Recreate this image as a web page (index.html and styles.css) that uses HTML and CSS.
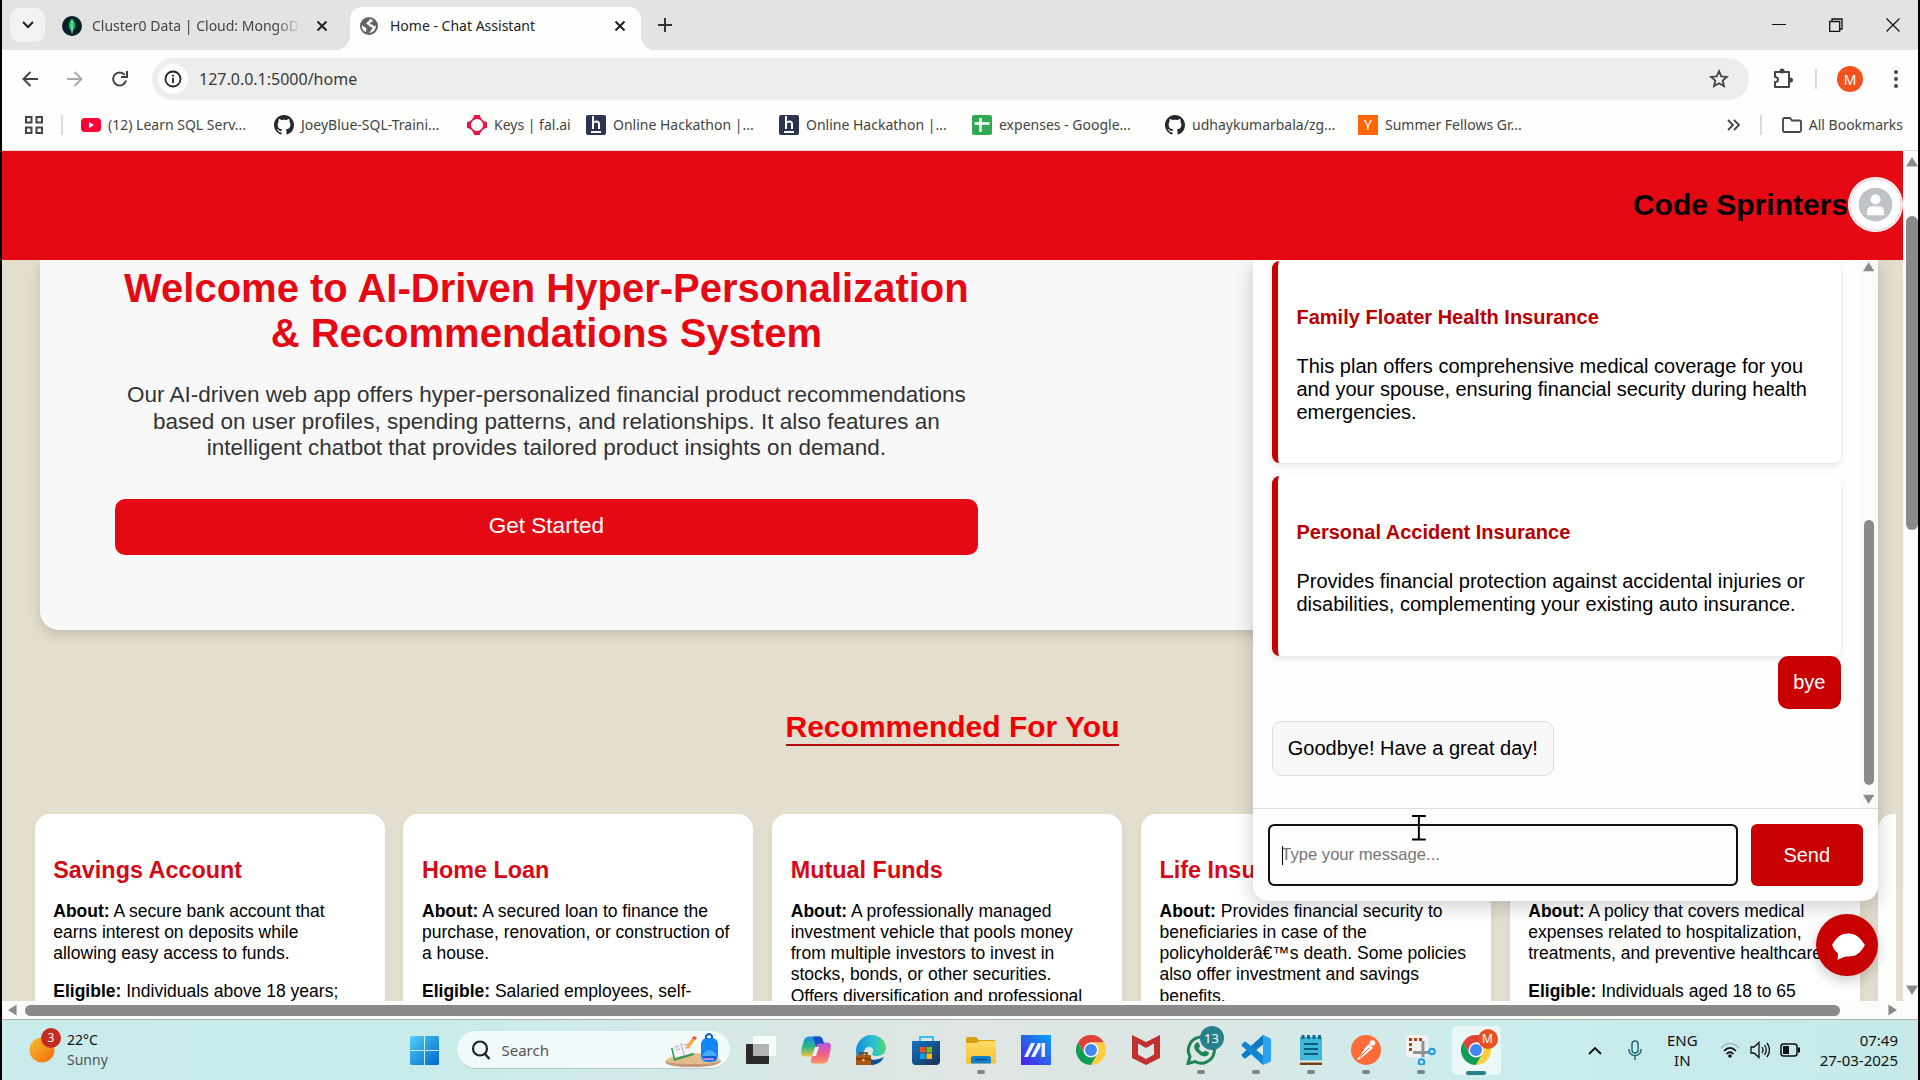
FILE: index.html
```html
<!DOCTYPE html>
<html lang="en">
<head>
<meta charset="utf-8">
<title>Home - Chat Assistant</title>
<link rel="stylesheet" href="styles.css">
</head>
<body>
<svg class="defs" aria-hidden="true">
  <defs>
    <linearGradient id="gWin" x1="0" y1="0" x2="1" y2="1"><stop offset="0" stop-color="#4fd0fb"/><stop offset="1" stop-color="#0067c8"/></linearGradient>
    <linearGradient id="gSun" x1="0" y1="0" x2="1" y2="1"><stop offset="0" stop-color="#fbc02d"/><stop offset="1" stop-color="#f06a10"/></linearGradient>
    <linearGradient id="gCopA" x1="0" y1="0" x2="0" y2="1"><stop offset="0" stop-color="#1a8fe8"/><stop offset=".5" stop-color="#28b58a"/><stop offset="1" stop-color="#f5c33b"/></linearGradient>
    <linearGradient id="gCopB" x1="0" y1="0" x2="0" y2="1"><stop offset="0" stop-color="#a95be8"/><stop offset=".5" stop-color="#ee5a8f"/><stop offset="1" stop-color="#ff9560"/></linearGradient>
    <linearGradient id="gEdge" x1="0" y1="0" x2="1" y2="0"><stop offset="0" stop-color="#1489d8"/><stop offset=".6" stop-color="#2cc3d2"/><stop offset="1" stop-color="#55d868"/></linearGradient>
    <linearGradient id="gStore" x1="0" y1="0" x2="1" y2="1"><stop offset="0" stop-color="#1173c4"/><stop offset="1" stop-color="#1c3156"/></linearGradient>
    <linearGradient id="gAsus" x1="0" y1="1" x2="1" y2="0"><stop offset="0" stop-color="#4b1fe8"/><stop offset="1" stop-color="#0ba2f8"/></linearGradient>
    <linearGradient id="gFold" x1="0" y1="0" x2="0" y2="1"><stop offset="0" stop-color="#ffdc6a"/><stop offset="1" stop-color="#f8c02a"/></linearGradient>
    <symbol id="github" viewBox="0 0 16 16"><path fill="#24292f" d="M8 0C3.58 0 0 3.58 0 8c0 3.54 2.29 6.53 5.47 7.59.4.07.55-.17.55-.38 0-.19-.01-.82-.01-1.49-2.01.37-2.53-.49-2.69-.94-.09-.23-.48-.94-.82-1.13-.28-.15-.68-.52-.01-.53.63-.01 1.08.58 1.23.82.72 1.21 1.87.87 2.33.66.07-.52.28-.87.51-1.07-1.78-.2-3.64-.89-3.64-3.95 0-.87.31-1.59.82-2.15-.08-.2-.36-1.02.08-2.12 0 0 .67-.21 2.2.82.64-.18 1.32-.27 2-.27s1.36.09 2 .27c1.53-1.04 2.2-.82 2.2-.82.44 1.1.16 1.92.08 2.12.51.56.82 1.27.82 2.15 0 3.07-1.87 3.75-3.65 3.95.29.25.54.73.54 1.48 0 1.07-.01 1.93-.01 2.2 0 .21.15.46.55.38A8.01 8.01 0 0 0 16 8c0-4.42-3.58-8-8-8z"/></symbol>
    <symbol id="chrome" viewBox="0 0 30 30"><path fill="#db4437" d="M15 15 2 7.500A15 15 0 0 1 28 7.500L15 7.500z"/><path fill="#db4437" d="M2 7.500 8.500 18.750 15 7.500z"/><path fill="#0f9d58" d="M2 7.500A15 15 0 0 0 15 30L21.500 18.750 8.500 18.750z"/><path fill="#ffcd40" d="M28 7.500A15 15 0 0 1 15 30L21.500 18.750 15 7.500z"/><circle cx="15" cy="15" r="7.500" fill="#fff"/><circle cx="15" cy="15" r="6" fill="#4285f4"/></symbol>
    <symbol id="cross" viewBox="0 0 12 12"><path d="M1.500 1.500l9 9M10.500 1.500l-9 9" fill="none" stroke="currentColor" stroke-width="2"/></symbol>
    <symbol id="hack" viewBox="0 0 20 20"><rect width="20" height="20" rx="2" fill="#2b3350"/><path d="M7 1v13M7 8.500c1-2.500 6-3 6 .5v5M5 17h10" fill="none" stroke="#fff" stroke-width="2"/></symbol>
  </defs>
</svg>

<div class="browser">
  <div class="tabstrip">
    <button class="tab-search" aria-label="Search tabs"><svg width="12" height="8" viewBox="0 0 12 8"><path d="M1 1l5 5 5-5" fill="none" stroke="#222" stroke-width="2"/></svg></button>
    <div class="tab">
      <svg width="20" height="20" viewBox="0 0 20 20"><circle cx="10" cy="10" r="10" fill="#061f2b"/><path d="M10 2.500c5 5 3.500 10 0 13.500-3.500-3.500-5-8.500 0-13.500z" fill="#10c25a"/><path d="M10 5v12.500" stroke="#b8e6c4"/></svg>
      <span class="tab-title fade">Cluster0 Data | Cloud: MongoDB</span>
      <button class="tab-close" aria-label="Close tab"><svg width="12" height="12"><use href="#cross"/></svg></button>
    </div>
    <div class="tab active">
      <svg width="18" height="18" viewBox="0 0 18 18"><circle cx="9" cy="9" r="9" fill="#5f6368"/><path d="M10.500 2c-2 .5-1 2.500-3 3-1.500.5-1.500 2 0 2.500 2 .3 1 2 3 2.200 2 .2 2.500 1.800 1 3-1 .8-1 2.500-2.500 3.300 4-.3 7-3.500 7-7.500-1 1-2 1-3-.5-.8-1-3 .2-3-1.500 0-1.500 2.500-1 3-3zM2 8c1.500 2 4 2 4.500 4 .3 1.500-1 1.500-.5 3C3 14 1.500 11 2 8z" fill="#fff"/></svg>
      <span class="tab-title">Home - Chat Assistant</span>
      <button class="tab-close" aria-label="Close tab"><svg width="12" height="12"><use href="#cross"/></svg></button>
    </div>
    <button class="new-tab" aria-label="New tab"><svg width="14" height="14" viewBox="0 0 14 14"><path d="M7 0v14M0 7h14" stroke="#333" stroke-width="2"/></svg></button>
    <div class="window-controls">
      <button aria-label="Minimize"><svg width="14" height="14" viewBox="0 0 14 14"><path d="M0 6.500h14" stroke="#111"/></svg></button>
      <button aria-label="Restore"><svg width="14" height="14" viewBox="0 0 14 14"><path d="M.7 3.500h10v10H.7zM3 3V1h10v10h-2" fill="none" stroke="#111" stroke-width="1.300"/></svg></button>
      <button aria-label="Close"><svg width="14" height="14" viewBox="0 0 14 14"><path d="M.5.5l13 13M13.500.5l-13 13" stroke="#111" stroke-width="1.200"/></svg></button>
    </div>
  </div>

  <div class="toolbar">
    <button aria-label="Back"><svg width="16" height="16" viewBox="0 0 16 16"><path d="M16 8H2M8.500 1L1.500 8l7 7" fill="none" stroke="#444" stroke-width="2"/></svg></button>
    <button aria-label="Forward"><svg width="16" height="16" viewBox="0 0 16 16"><path d="M0 8h14M7.500 1l7 7-7 7" fill="none" stroke="#aaa" stroke-width="2"/></svg></button>
    <button aria-label="Reload"><svg width="16" height="16" viewBox="0 0 16 16"><path d="M14 9.500A6.500 6.500 0 1 1 12.800 4M15 0v6H9" fill="none" stroke="#444" stroke-width="2"/></svg></button>
    <div class="omnibox">
      <button class="site-info" aria-label="Site information"><svg width="18" height="18" viewBox="0 0 18 18"><circle cx="9" cy="9" r="7.500" fill="none" stroke="#222" stroke-width="1.800"/><path d="M9 8v5M9 4.700v2" stroke="#222" stroke-width="1.800"/></svg></button>
      <input class="url" type="text" aria-label="Address" value="127.0.0.1:5000/home">
      <button aria-label="Bookmark this page"><svg width="20" height="20" viewBox="0 0 20 20"><path d="M10 2.200l2.300 5.200 5.600.5-4.200 3.700 1.300 5.500-5-2.900-5 2.900 1.300-5.500L2.100 7.900l5.600-.5z" fill="none" stroke="#444" stroke-width="1.800"/></svg></button>
    </div>
    <button class="extensions" aria-label="Extensions"><svg width="22" height="22" viewBox="0 0 22 22"><path d="M3 4h14v15H3v-5c4 0 4-5 0-5z" fill="none" stroke="#444" stroke-width="2" stroke-linejoin="round"/><circle cx="10" cy="3" r="2.500" fill="#444"/><circle cx="18.500" cy="12" r="2.500" fill="#444"/></svg></button>
    <span class="rule"></span>
    <button class="profile" aria-label="Profile">M</button>
    <button class="menu" aria-label="Menu"><svg width="4" height="18" viewBox="0 0 4 18"><circle cx="2" cy="2" r="2" fill="#444"/><circle cx="2" cy="9" r="2" fill="#444"/><circle cx="2" cy="16" r="2" fill="#444"/></svg></button>
  </div>

  <nav class="bookmarks">
    <button aria-label="Apps"><svg width="18" height="18" viewBox="0 0 18 18"><path d="M1 1h5.500v5.500H1zM11.500 1H17v5.500h-5.500zM1 11.500h5.500V17H1zM11.500 11.500H17V17h-5.500z" fill="none" stroke="#444" stroke-width="2"/></svg></button>
    <span class="rule"></span>
    <a href="#" class="mark"><svg width="20" height="20" viewBox="0 0 20 20"><rect y="3" width="20" height="14" rx="4" fill="#f03"/><path d="M8 7v6l5-3z" fill="#fff"/></svg><span>(12) Learn SQL Serv...</span></a>
    <a href="#" class="mark"><svg width="20" height="20"><use href="#github"/></svg><span>JoeyBlue-SQL-Traini...</span></a>
    <a href="#" class="mark short"><svg width="20" height="20" viewBox="0 0 20 20"><path fill="#e0174a" fill-rule="evenodd" d="M7 0h6c.3 3.500 3 6.500 7 7v6c-4 .5-6.700 3.500-7 7H7c-.3-3.500-3-6.500-7-7V7c4-.5 6.700-3.500 7-7zm3 4a6 6 0 1 0 0 12 6 6 0 0 0 0-12z"/></svg><span>Keys | fal.ai</span></a>
    <a href="#" class="mark"><svg width="20" height="20"><use href="#hack"/></svg><span>Online Hackathon |...</span></a>
    <a href="#" class="mark"><svg width="20" height="20"><use href="#hack"/></svg><span>Online Hackathon |...</span></a>
    <a href="#" class="mark"><svg width="20" height="20" viewBox="0 0 20 20"><rect width="20" height="20" rx="2" fill="#31a953"/><path d="M8.500 3v14M2.500 8.500h15" stroke="#fff" stroke-width="2.500"/></svg><span>expenses - Google...</span></a>
    <a href="#" class="mark"><svg width="20" height="20"><use href="#github"/></svg><span>udhaykumarbala/zg...</span></a>
    <a href="#" class="mark"><span class="yc">Y</span><span>Summer Fellows Gr...</span></a>
    <button class="more" aria-label="More bookmarks"><svg width="13" height="12" viewBox="0 0 13 12"><path d="M1 1l5 5-5 5M7 1l5 5-5 5" fill="none" stroke="#444" stroke-width="1.800"/></svg></button>
    <span class="rule"></span>
    <a href="#" class="mark all"><svg width="20" height="16" viewBox="0 0 20 16"><path d="M1 2.500Q1 1 2.500 1H8l2 2.500h7.500Q19 3.500 19 5v8.500q0 1.500-1.500 1.500h-15Q1 15 1 13.500z" fill="none" stroke="#444" stroke-width="1.800"/></svg><span>All Bookmarks</span></a>
  </nav>

  <div class="frame">
    <div class="view">
      <div class="page">
        <header class="site-header">
          <h2>Code Sprinters</h2>
          <a href="#" class="avatar" aria-label="Profile"><svg viewBox="0 0 44 44"><circle cx="22" cy="22" r="22" fill="#fff"/><circle cx="22" cy="22" r="20.500" fill="none" stroke="#f6b0b4" stroke-width=".6"/><circle cx="22" cy="22" r="13.500" fill="#bfc2c6"/><circle cx="22" cy="18" r="4" fill="#fff"/><path d="M15 29.500c0-6.500 3-6 7-6s7-.5 7 6q0 1-1 1H16q-1 0-1-1z" fill="#fff"/></svg></a>
        </header>
        <main>
          <section class="hero">
            <div class="hero-text">
              <h1>Welcome to AI-Driven Hyper-Personalization &amp; Recommendations System</h1>
              <p>Our AI-driven web app offers hyper-personalized financial product recommendations based on user profiles, spending patterns, and relationships. It also features an intelligent chatbot that provides tailored product insights on demand.</p>
              <button>Get Started</button>
            </div>
          </section>
          <section class="recommended">
            <h2>Recommended For You</h2>
            <div class="cards">
              <article class="card"><h3>Savings Account</h3><p><b>About:</b> A secure bank account that earns interest on deposits while allowing easy access to funds.</p><p><b>Eligible:</b> Individuals above 18 years;</p></article>
              <article class="card"><h3>Home Loan</h3><p><b>About:</b> A secured loan to finance the purchase, renovation, or construction of a house.</p><p><b>Eligible:</b> Salaried employees, self-</p></article>
              <article class="card"><h3>Mutual Funds</h3><p><b>About:</b> A professionally managed investment vehicle that pools money from multiple investors to invest in stocks, bonds, or other securities. Offers diversification and professional</p></article>
              <article class="card"><h3>Life Insurance</h3><p><b>About:</b> Provides financial security to beneficiaries in case of the policyholderâ€™s death. Some policies also offer investment and savings benefits.</p></article>
              <article class="card"><h3>Health Insurance</h3><p><b>About:</b> A policy that covers medical expenses related to hospitalization, treatments, and preventive healthcare.</p><p><b>Eligible:</b> Individuals aged 18 to 65</p></article>
              <article class="card"></article>
            </div>
          </section>
        </main>

        <aside class="chat">
          <div class="chat-body">
            <div class="messages">
              <article class="product tall"><h4>Family Floater Health Insurance</h4><p>This plan offers comprehensive medical coverage for you and your spouse, ensuring financial security during health emergencies.</p></article>
              <article class="product"><h4>Personal Accident Insurance</h4><p>Provides financial protection against accidental injuries or disabilities, complementing your existing auto insurance.</p></article>
              <div class="bubble user">bye</div>
              <div class="bubble bot">Goodbye! Have a great day!</div>
            </div>
            <div class="scroll chat-scroll">
              <svg class="arrow" viewBox="0 0 12 10"><path d="M6 0l6 9.500H0z"/></svg>
              <span class="before"></span><span class="thumb"></span><span class="after"></span>
              <svg class="arrow" viewBox="0 0 12 10"><path d="M6 10l6-9.500H0z"/></svg>
            </div>
          </div>
          <form class="composer">
            <div class="field"><input type="text" aria-label="Message" placeholder="Type your message..."><span class="caret"></span></div>
            <button type="button">Send</button>
          </form>
        </aside>
        <button class="chat-toggle" aria-label="Toggle chat"><svg width="28" height="24" viewBox="0 0 32 26"><path d="M16 1.500c6.500 0 10 3 15 10.500-4.500 8-8.500 10.500-15 10.500-2.500 0-4 .3-6 1.500l-4 1.500.5-5.500C4 17.500 2 15.500 1 12 5.500 4 9.500 1.500 16 1.500z" fill="#fff"/></svg></button>
        <svg class="pointer" width="11" height="22" viewBox="0 0 14 26" aria-hidden="true"><path d="M0 1h14M0 25h14M7 1v24" stroke="#000" stroke-width="2"/></svg>
      </div>
    </div>
    <div class="scroll page-scroll">
      <svg class="arrow" viewBox="0 0 12 10"><path d="M6 0l6 9.500H0z"/></svg>
      <span class="before"></span><span class="thumb"></span><span class="after"></span>
      <svg class="arrow" viewBox="0 0 12 10"><path d="M6 10l6-9.500H0z"/></svg>
    </div>
    <div class="scroll across">
      <svg class="arrow" viewBox="0 0 10 12"><path d="M0 6l9.500-6v12z"/></svg>
      <span class="thumb"></span><span class="after"></span>
      <svg class="arrow" viewBox="0 0 10 12"><path d="M10 6L.5 0v12z"/></svg>
    </div>
  </div>
</div>

<footer class="taskbar">
  <button class="weather">
    <span class="sun"><svg width="26" height="26" viewBox="0 0 26 26"><circle cx="13" cy="13" r="12.500" fill="url(#gSun)"/></svg><span class="badge red">3</span></span>
    <span class="two-line"><span>22°C</span><span class="dim">Sunny</span></span>
  </button>
  <div class="apps">
    <button class="app start" aria-label="Start"><svg width="29" height="29" viewBox="0 0 29 29"><path d="M1 0h13v14H0V1zM15 0h13l1 1v13H15zM0 15h14v14H1l-1-1zM15 15h14v13l-1 1H15z" fill="url(#gWin)"/></svg></button>
    <label class="search">
      <svg width="20" height="20" viewBox="0 0 20 20"><circle cx="9" cy="8.500" r="7" fill="none" stroke="#222" stroke-width="2.200"/><path d="M13.500 13.500l5 5.500" stroke="#222" stroke-width="2.500"/></svg>
      <input type="text" placeholder="Search" aria-label="Search">
      <svg width="58" height="34" viewBox="0 0 58 34"><path d="M1 28q10-8 28-8t28 7q-3 6-28 6.500T1 28z" fill="#e3bd90"/><path d="M1 28q0 6 28 6t28-7q-3 4-28 4T1 28z" fill="#c49a74"/><path d="M7 15l17-5 6 12-20 6z" fill="#3b9a54"/><path d="M8 12l9-2 9-2 3 12-18 5z" fill="#f4f3fb"/><path d="M17 10l3 12M11 14l4-1M12 17l4-1M20 12l5-1M21 15l5-1" stroke="#aab"/><path d="M22 14l6-9 3 2-7 9z" fill="#f7a638"/><path d="M28 5l2-2 3 2-2 2z" fill="#e34b3d"/><rect x="37" y="5" width="17" height="24" rx="6" fill="#1287f5"/><path d="M42 6V3q3-4 6 0v3" fill="none" stroke="#0b63c8" stroke-width="2"/><path d="M39 18h13v9H39z" fill="#0c5bd4"/><path d="M39 20q6-6 13 0v3H39z" fill="#43aefc"/><path d="M39 25h11v2H39z" fill="#b987f2"/></svg>
    </label>
    <button class="app" aria-label="Task view"><svg width="30" height="30" viewBox="0 0 30 30"><rect y="9" width="23" height="20" rx="1" fill="#2a2a28"/><rect x="7" y="1" width="23" height="20" rx="1" fill="#fff" opacity=".8"/><path d="M7 9h16v12H7z" fill="#aaa" opacity=".8"/></svg></button>
    <button class="app" aria-label="Copilot"><svg width="30" height="30" viewBox="0 0 30 30"><path d="M8 1.500h10q3 0 4 4l1 3h-5q-2 0-3 4l-2 6q-1 3-4 3H4q-4 0-4-4 0-3 2-9 1-7 6-7z" fill="url(#gCopA)"/><path d="M22 28.500H12q-3 0-2-4l5-15q1-2 4-2h7q4 0 4 4 0 3-2 10-1 7-6 7z" fill="url(#gCopB)"/><path d="M14 12h4l-3 9h-4z" fill="#f4ece8"/><path d="M12 1.500h6q3 0 4 4l1 3h-5q-2 0-3 3z" fill="#1550c8"/></svg></button>
    <button class="app" aria-label="Edge"><svg width="30" height="30" viewBox="0 0 30 30"><path d="M0 16C0 7 7 0 15 0c9 0 15 6 15 13 0 5-4 8-9 8-4 0-6-1-4-4 1-3-1-5-4-5-5 0-6 6-4 10 1 3 4 6 8 7C6 30 0 25 0 16z" fill="url(#gEdge)"/><path d="M10 18c1 7 8 9 18 4-3 6-8 8-13 8-4-1-7-6-5-12z" fill="#0c4f9c"/><rect y="20" width="15" height="10" rx="1" fill="#a85a12"/><path d="M4 20v-2h7v2M0 24h15" fill="none" stroke="#6e3808" stroke-width="1.500"/><circle cx="7.500" cy="25" r="1.200" fill="#ffd55a"/></svg></button>
    <button class="app" aria-label="Store"><svg width="30" height="30" viewBox="0 0 30 30"><path d="M9 6V2h13v4" fill="none" stroke="#39bdf5" stroke-width="2"/><path d="M1 6h28v20q0 4-4 4H5q-4 0-4-4z" fill="url(#gStore)"/><path d="M9 12h5.500v5.500H9z" fill="#f25022"/><path d="M15.500 12H21v5.500h-5.500z" fill="#7fba00"/><path d="M9 18.500h5.500V24H9z" fill="#00a4ef"/><path d="M15.500 18.500H21V24h-5.500z" fill="#ffb900"/></svg></button>
    <button class="app on" aria-label="Files"><svg width="30" height="30" viewBox="0 0 30 30"><path d="M0 4q0-2 2-2h8l3 3h15q2 0 2 2v3H0z" fill="#d99f10"/><path d="M0 8h11l3-2h16v21q0 1.500-1.500 1.500h-27Q0 28.500 0 27z" fill="url(#gFold)"/><path d="M5 28.500v-5q0-2.500 2.500-2.500h15q2.500 0 2.500 2.500v5z" fill="#1380cc"/><path d="M9 24.500h12" stroke="#0a4f8c" stroke-width="1.500"/></svg></button>
    <button class="app" aria-label="MyASUS"><svg width="30" height="30" viewBox="0 0 30 30"><path d="M0 0h30v30H0z" fill="url(#gAsus)"/><path d="M3 22l7-14h4L7 22zM10 22l7-14h7v14h-4v-4h-4l-2 4z" fill="#fff" opacity=".92"/><path d="M16 18l4-7v7z" fill="#2468f2"/><path d="M20 8v14" stroke="#2468f2"/></svg></button>
    <button class="app" aria-label="Chrome"><svg width="30" height="30"><use href="#chrome"/></svg></button>
    <button class="app" aria-label="McAfee"><svg width="28" height="30" viewBox="0 0 28 30"><path fill="#c0302e" fill-rule="evenodd" d="M0 0l14 7 14-7v23l-14 7-14-7zM6 8.500v11l8 4.500 8-4.500v-11l-8 4.500z"/></svg></button>
    <button class="app on" aria-label="WhatsApp"><svg width="30" height="30" viewBox="0 0 30 30"><path d="M2 28.500l2-7A13 13 0 1 1 9 26.500z" fill="none" stroke="#1f8454" stroke-width="3"/><path d="M10 8c2-2 3 0 4 3 0 1-2 2-1 3 1 2 3 3 4 3 1 0 2-2 3-1 3 1 4 2 2 4-3 3-8 1-11-3-3-3-4-6-1-9z" fill="#1f8454"/></svg><span class="badge teal">13</span></button>
    <button class="app on" aria-label="Visual Studio Code"><svg width="30" height="30" viewBox="0 0 30 30"><path d="M22 0L1 19q-1 1 0 2l2 2q1 1 2 0L24 8z" fill="#0d7bc4"/><path d="M22 30L1 11q-1-1 0-2l2-2q1-1 2 0l19 15z" fill="#1288d4"/><path d="M22 0l7 3q1 .5 1 2v20q0 1.500-1 2l-7 3z" fill="#2aa4f0"/></svg></button>
    <button class="app on" aria-label="Notepad"><svg width="30" height="30" viewBox="0 0 30 30"><path d="M4 2h22v25H4z" fill="#3fb8da"/><path d="M4 27h22v3H4z" fill="#70411b"/><path d="M4 25.500h22v2H4z" fill="#f4f1e2"/><path d="M8 9h14M8 14h14M8 19h14" stroke="#0c5a7a" stroke-width="1.800"/><path d="M7 0v4M12.500 0v4M18 0v4M23.500 0v4" stroke="#17678c" stroke-width="3"/></svg></button>
    <button class="app on" aria-label="Postman"><svg width="30" height="30" viewBox="0 0 30 30"><circle cx="15" cy="15" r="15" fill="#ff6c37"/><circle cx="21.500" cy="8" r="2.800" fill="#fff"/><path d="M18 9l4 4-8 7-7 5-1-1 4-4 4-7z" fill="#fff"/><path d="M9 22l9-9" stroke="#ff6c37"/></svg></button>
    <button class="app on" aria-label="Snipping Tool"><svg width="30" height="30" viewBox="0 0 30 30"><rect width="22" height="22" rx="2" fill="#f1f1ef"/><path d="M4.500 16V4.500H16" fill="none" stroke="#b3400f" stroke-width="3" stroke-dasharray="3 2"/><path d="M17 6v16M7 17.500h17" stroke="#8b9298" stroke-width="3"/><circle cx="26" cy="16.500" r="2.800" fill="none" stroke="#1e9be4" stroke-width="2"/><circle cx="15.500" cy="27" r="2.800" fill="none" stroke="#1e9be4" stroke-width="2"/></svg></button>
    <button class="app current" aria-label="Chrome, Home - Chat Assistant"><svg width="30" height="30"><use href="#chrome"/></svg><span class="badge orange">M</span></button>
  </div>
  <div class="tray">
    <button aria-label="Hidden icons"><svg width="14" height="9" viewBox="0 0 14 9"><path d="M1 8l6-6 6 6" fill="none" stroke="#111" stroke-width="1.800"/></svg></button>
    <button class="mic" aria-label="Microphone"><svg width="14" height="20" viewBox="0 0 14 20"><rect x="4" y="1" width="6" height="12" rx="3" fill="none" stroke="#246b78" stroke-width="1.500"/><path d="M1 9q0 6.500 6 6.500T13 9M7 15.500V20" fill="none" stroke="#246b78" stroke-width="1.500"/></svg></button>
    <button class="two-line lang"><span>ENG</span><span>IN</span></button>
    <button class="status" aria-label="Network, volume and battery">
      <svg width="20" height="16" viewBox="0 0 20 16"><path d="M1 6q9-9 18 0" fill="none" stroke="#9fb5b6" stroke-width="1.600"/><path d="M4 9q6-6 12 0M6.500 12q3.500-3.500 7 0" fill="none" stroke="#111" stroke-width="1.700"/><circle cx="10" cy="14" r="1.800" fill="#111"/></svg>
      <svg width="20" height="18" viewBox="0 0 20 18"><path d="M1 6h3l5-4.500v15L4 12H1zM12 6q2 3 0 6M14.500 4q3.500 5 0 10M17 2q5 7 0 14" fill="none" stroke="#111" stroke-width="1.300"/></svg>
      <svg width="21" height="14" viewBox="0 0 21 14"><rect x="1" y="1" width="16" height="12" rx="2.500" fill="none" stroke="#111" stroke-width="1.500"/><rect x="3" y="3" width="6" height="8" fill="#111"/><path d="M19 4.500v5" stroke="#111" stroke-width="2"/></svg>
    </button>
    <button class="two-line clock"><span>07:49</span><span>27-03-2025</span></button>
  </div>
</footer>
</body>
</html>
```
FILE: styles.css
```css
* { box-sizing: border-box; }

body {
  margin: 0;
  height: 100vh;
  display: flex;
  flex-direction: column;
  border: solid #000;
  border-width: 0 2px;
  overflow: hidden;
  font-family: "Noto Sans", "Open Sans", sans-serif;
  font-size: 14px;
  color: #444;
}

button {
  padding: 0;
  border: 0;
  background: none;
  font: inherit;
  color: inherit;
  display: flex;
  align-items: center;
  justify-content: center;
}

input { border: 0; background: none; min-width: 0; outline: 0; }
a { color: inherit; text-decoration: none; }
svg { display: block; flex: none; }
.defs { position: absolute; width: 0; height: 0; }

/* Browser window */
.browser {
  flex: 1;
  min-height: 0;
  display: flex;
  flex-direction: column;
  background: #fefefd;
}

.tabstrip {
  flex: none;
  height: 50px;
  display: flex;
  align-items: center;
  padding-left: 8px;
  background: #e3e3e3;
}

.tab-search {
  width: 35px;
  height: 34px;
  border-radius: 10px;
  background: #f2f2f2;
}

.tab {
  width: 291px;
  height: 43px;
  align-self: flex-end;
  display: flex;
  align-items: center;
  gap: 10px;
  padding: 0 10px 6px 15px;
}

.tab.active {
  position: relative;
  margin-left: 12px;
  padding: 0 15px 6px 10px;
  background: #fefefd;
  border-radius: 12px 12px 0 0;
}

.tab.active::before,
.tab.active::after {
  content: "";
  position: absolute;
  bottom: 0;
  width: 14px;
  height: 14px;
}

.tab.active::before { right: 100%; background: radial-gradient(circle at 0 0, transparent 14px, #fefefd 14px); }
.tab.active::after { left: 100%; background: radial-gradient(circle at 100% 0, transparent 14px, #fefefd 14px); }

.tab-search + .tab { margin-left: 2px; }
.tab-search + .tab .tab-close { margin-left: 5px; }
.tab-title { flex: 1; white-space: nowrap; overflow: hidden; }
.active .tab-title { color: #222; padding-left: 2px; }
.fade { mask-image: linear-gradient(90deg, #000 88%, transparent); }
.tab-close { color: #222; }
.new-tab { margin-left: 17px; }
.window-controls { margin-left: auto; margin-right: -3px; display: flex; }
.window-controls button { width: 57px; height: 50px; }

.toolbar {
  flex: none;
  height: 58px;
  display: flex;
  align-items: center;
  padding-left: 5px;
}

.toolbar > button { width: 45px; height: 42px; }

.omnibox {
  flex: 1;
  height: 42px;
  margin-left: 10px;
  padding: 0 20px 0 6px;
  display: flex;
  align-items: center;
  border-radius: 21px;
  background: #ededec;
}

.site-info { width: 30px; height: 30px; border-radius: 50%; background: #fefefd; }

.url {
  flex: 1;
  padding: 0 0 0 11px;
  font: 16px "Noto Sans", sans-serif;
  color: #3a3a3a;
}

.rule { width: 2px; height: 20px; background: #dcdcdc; }
.toolbar > .extensions { margin-left: 11px; width: 46px; }
.toolbar .rule { margin-left: 9px; }

.toolbar > .profile {
  width: 26px;
  height: 26px;
  margin-left: 20px;
  border-radius: 50%;
  background: #f4511e;
  color: #fff;
}

.toolbar > .menu { margin-left: 10px; }

.bookmarks {
  flex: none;
  height: 43px;
  padding: 0 15px 9px 23px;
  display: flex;
  align-items: center;
  border-bottom: 1px solid #dcdcda;
}

.bookmarks .rule { margin: 0 18px; }
.bookmarks .more + .rule { margin: 0 20px; }
.mark { width: 193px; display: flex; align-items: center; gap: 7px; white-space: nowrap; }
.mark.short { width: 119px; }
.mark.all { width: auto; }
.more { margin-left: auto; }

.yc {
  width: 20px;
  height: 20px;
  background: #f60;
  color: #fff;
  text-align: center;
  line-height: 20px;
}

.frame {
  flex: 1;
  min-height: 0;
  display: grid;
  grid-template: minmax(0, 1fr) 19px / minmax(0, 1fr) 15px;
}

.view { display: flex; overflow: hidden; }

/* Scrollbars */
.scroll { display: flex; flex-direction: column; align-items: center; background: #fbfbfa; }
.scroll .thumb { border-radius: 6px; background: #8a8a8a; }
.arrow { fill: #8a8a8a; }

.page-scroll { padding: 6px 0 6px 3px; }
.page-scroll .arrow { width: 12px; height: 10px; }
.page-scroll .thumb { width: 12px; flex: 315; }
.page-scroll .before { flex: 49; }
.page-scroll .after { flex: 457; }

.across { flex-direction: row; grid-column: 1 / -1; padding: 0 21px 0 6px; border-bottom: 1px solid #a9b3b3; }
.across .arrow { width: 9px; height: 12px; }
.across .thumb { flex: 1815; height: 11px; margin-left: 8px; }
.across .after { flex: 48; }

/* Site, shown at 125% */
.page {
  zoom: 1.25;
  flex: 1;
  min-width: 0;
  position: relative;
  overflow: hidden;
  background: #e4dece;
  color: #000;
  font: 16px/18px "Liberation Sans", Arial, sans-serif;
}

.site-header {
  position: relative;
  z-index: 2;
  height: 87px;
  padding-bottom: 2px;
  display: flex;
  align-items: center;
  justify-content: flex-end;
  background: #e50914;
}

.site-header h2 { margin: 0; font-size: 24px; line-height: 28px; }
.avatar { width: 44px; }

.hero {
  margin: 0 30px;
  padding: 5px 60px 60px;
  border-radius: 0 0 15px 15px;
  background: #f8f8f9;
  box-shadow: 0 4px 10px rgba(0, 0, 0, .15);
}

.hero-text { width: 691px; max-width: 100%; text-align: center; }
.hero h1 { margin: 0 0 21px; font-size: 32px; line-height: 36px; color: #e50914; }
.hero p { margin: 0 0 30px; font-size: 18px; line-height: 21px; color: #333; }

.hero button {
  width: 100%;
  height: 45px;
  border-radius: 8px;
  background: #e50914;
  color: #fff;
  font-size: 18px;
}

.recommended { padding-top: 63px; text-align: center; }

.recommended h2 {
  display: inline-block;
  margin: 0 0 55px;
  border-bottom: 2px solid #b20710;
  font-size: 24px;
  line-height: 28px;
  color: #f00000;
}

.cards {
  margin: 0 6px;
  padding-left: 20px;
  display: flex;
  gap: 15px;
  overflow: hidden;
  text-align: left;
}

.card {
  flex: none;
  width: 280px;
  min-height: 320px;
  padding: 15px;
  border-radius: 12px;
  background: #fff;
  box-shadow: 0 4px 8px rgba(0, 0, 0, .05);
  font-size: 14px;
  line-height: 17px;
}

.card h3 { margin: 19px 0 13px; font-size: 1.17rem; line-height: 22px; color: #d40a18; }
.card p { margin: 0 0 14px; }
.card p + p { margin-top: -1px; }

.chat {
  position: absolute;
  z-index: 1;
  top: 87px;
  right: 20px;
  bottom: 80px;
  width: 500px;
  display: flex;
  flex-direction: column;
  border-radius: 0 0 12px 12px;
  background: #fefefe;
  box-shadow: 0 4px 15px rgba(0, 0, 0, .2);
}

.chat-body { flex: 1; min-height: 0; display: flex; }

.messages {
  flex: 1;
  padding: 0 15px 25px;
  display: flex;
  flex-direction: column;
  justify-content: flex-end;
  overflow: hidden;
}

.product {
  flex: none;
  min-height: 144px;
  margin-bottom: 10px;
  padding: 15px;
  border-left: 5px solid #c80000;
  border-radius: 6px;
  background: #fff;
  box-shadow: 0 2px 5px rgba(0, 0, 0, .1);
  line-height: normal;
}

.product.tall { min-height: 162px; }
.product:nth-child(2) { margin-bottom: 0; }
.product h4 { margin: 21px 0; color: #b80000; }
.product p { margin: 0; }

.bubble { padding: 12px; border-radius: 8px; line-height: normal; }
.user { align-self: flex-end; margin-bottom: 10px; background: #c80000; color: #fff; }
.bot { align-self: flex-start; border: 1px solid #ddd; background: #f8f8f9; }

.chat-scroll { width: 15px; padding: 2px 0 3px; }
.chat-scroll .arrow { width: 9px; height: 8px; }
.chat-scroll .before { flex: 247; }
.chat-scroll .thumb { width: 8px; flex: 264; }
.chat-scroll .after { flex: 9; }

.composer {
  display: flex;
  gap: 10px;
  padding: 12px;
  border-top: 1px solid #ddd;
}

.field { flex: 1; position: relative; display: flex; }

.field input {
  flex: 1;
  padding: 0 9px;
  border: 2px solid #101010;
  border-radius: 5px;
  font: 0.83rem "Liberation Sans", Arial, sans-serif;
}

.field input::placeholder { color: #757575; }
.caret { position: absolute; left: 11px; top: 18px; width: 1px; height: 15px; background: #000; }

.composer button {
  width: 90px;
  height: 50px;
  border-radius: 5px;
  background: #c80000;
  color: #fff;
}

.chat-toggle {
  position: absolute;
  z-index: 1;
  right: 20px;
  bottom: 20px;
  width: 50px;
  height: 50px;
  border-radius: 50%;
  background: #c80000;
  box-shadow: 0 4px 10px rgba(0, 0, 0, .2);
}

.chat-toggle svg { margin: 2px 0 0 2px; }
.pointer { position: absolute; z-index: 3; right: 382px; bottom: 128px; }

/* Taskbar */
.taskbar {
  flex: none;
  height: 60px;
  padding: 0 20px 0 27px;
  display: flex;
  align-items: center;
  justify-content: space-between;
  background: linear-gradient(90deg, #c9ebec, #c8eceb 22%, #dfe6e3 50%, #dde6e4 60%, #c9edee 80%, #c6e9ea);
  font-size: 15px;
  color: #111;
}

.two-line { display: flex; flex-direction: column; line-height: 20px; }
.dim { color: #555; }
.weather { flex: 1; justify-content: flex-start; gap: 12px; }
.weather .two-line { align-items: flex-start; font-size: 14px; }
.sun { position: relative; }

.badge {
  position: absolute;
  width: 20px;
  height: 20px;
  border-radius: 50%;
  color: #fff;
  font-size: 12px;
  line-height: 20px;
  text-align: center;
}

.red { left: 12px; top: -9px; background: #c42b1c; }
.teal { right: 2px; top: 0; width: 24px; height: 24px; line-height: 24px; font-size: 13px; background: #27808c; }
.orange { right: 3px; top: 3px; background: #e8501f; }

.apps { display: flex; align-items: center; margin-right: 16px; }
.app { position: relative; width: 49px; height: 49px; margin: 0 3px; border-radius: 5px; }
.app.start { margin: 0 8px 0 0; }

.app.on::after,
.app.current::after {
  content: "";
  position: absolute;
  bottom: 1px;
  width: 8px;
  height: 4px;
  border-radius: 2px;
  background: #7d8585;
}

.app.current { background: rgba(255, 255, 255, .6); }
.app.current::after { width: 20px; bottom: 0; background: #27808c; }

.search {
  width: 273px;
  height: 38px;
  padding: 0 8px 0 14px;
  margin-right: 4px;
  display: flex;
  align-items: center;
  border-radius: 19px;
  background: rgba(250, 254, 255, .8);
  border-bottom: 1px solid #b5c8c8;
}

.search input { flex: 1; padding: 0 0 0 11px; font: 15px "Noto Sans", sans-serif; }
.search input::placeholder { color: #555; }

.tray { flex: 1; display: flex; align-items: center; justify-content: flex-end; margin-left: 8px; }
.mic { margin-left: 26px; }
.lang { margin-left: 25px; }
.status { margin-left: 22px; gap: 10px; }
.clock { margin-left: 19px; align-items: flex-end; }
```
